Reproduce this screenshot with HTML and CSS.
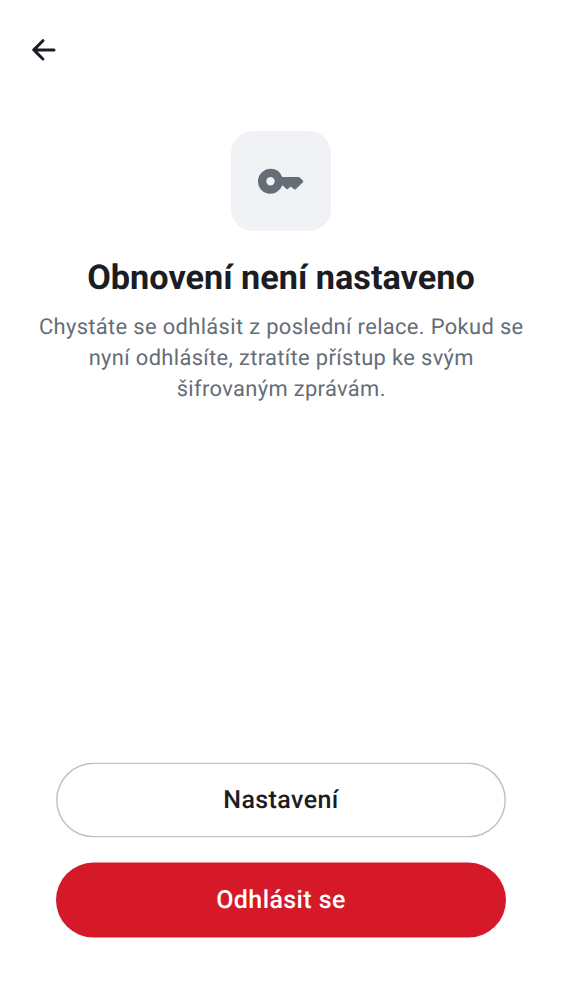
FILE: index.html
```html
<!DOCTYPE html>
<html lang="cs">
<head>
<meta charset="utf-8">
<title>Obnovení není nastaveno</title>
<link rel="stylesheet" href="styles.css">
</head>
<body>
<div class="screen">
  <header class="topbar">
    <button class="back" aria-label="Zpět">
      <svg class="back-icon" viewBox="0 0 24 22" fill="none" stroke="currentColor" stroke-width="3" stroke-linecap="round" stroke-linejoin="round"><path d="M10.900 1.700 1.800 10.900l9.100 9.100M2 10.900h20"/></svg>
    </button>
  </header>
  <main class="content">
    <div class="badge">
      <svg class="key-icon" viewBox="0 0 46 26"><path fill="currentColor" fill-rule="evenodd" d="M12.500.8A12.500 12.500 0 1 0 24.200 17.600h.6l3.300 3.200q.9.900 1.800.1l2.700-2.400 3.600 2.700q.9.700 1.700-.1l6.900-6.600q.9-1 0-2l-3-3q-.5-.5-1.300-.5H24.200A12.500 12.500 0 0 0 12.500.8zM12.500 9.100a4.200 4.200 0 1 1 0 8.400 4.200 4.200 0 0 1 0-8.400z"/></svg>
    </div>
    <h1 class="title">Obnovení není nastaveno</h1>
    <p class="message">Chystáte se odhlásit z poslední relace. Pokud se nyní odhlásíte, ztratíte přístup ke svým šifrovaným zprávám.</p>
  </main>
  <footer class="actions">
    <button class="button outlined">Nastavení</button>
    <button class="button danger">Odhlásit se</button>
  </footer>
</div>
</body>
</html>
```
FILE: styles.css
```css
* { box-sizing: border-box; }
body { margin: 0; background: #fff; font-family: Roboto, sans-serif; color: #1b1d22; text-rendering: geometricPrecision; }
.screen { height: 1000px; display: flex; flex-direction: column; }
.topbar { height: 131px; padding: 39px 32px; }
.back { display: block; padding: 0; border: 0; background: none; color: #1b1d22; }
.back-icon { display: block; width: 24px; height: 22px; }
.content { flex: 1; display: flex; flex-direction: column; align-items: center; padding: 0 32px; }
.badge { width: 100px; height: 100px; border-radius: 22px; background: #f0f2f5; color: #656d77; display: flex; align-items: center; justify-content: center; }
.key-icon { width: 46px; height: 26px; }
.title { margin: 27px 0 0; font-size: 34.250px; line-height: 41px; font-weight: 700; white-space: nowrap; }
.message { margin: 13px 0 0; padding-left: 0.500px; font-size: 21.900px; line-height: 31.200px; letter-spacing: 0.350px; text-align: center; color: #656d77; }
.actions { display: flex; flex-direction: column; gap: 25px; padding: 0 56px; margin-bottom: 62px; transform: translateY(-0.400px); }
.button { height: 75px; border: 0; padding: 1px 0 0; border-radius: 38px; font: 500 25px/30px Roboto, sans-serif; letter-spacing: 0.400px; text-rendering: geometricPrecision; }
.outlined { background: #fff; box-shadow: inset 0 0 0 1.500px #bcc3cb; color: #1b1d22; }
.danger { background: #d51928; color: #fff; }
```
